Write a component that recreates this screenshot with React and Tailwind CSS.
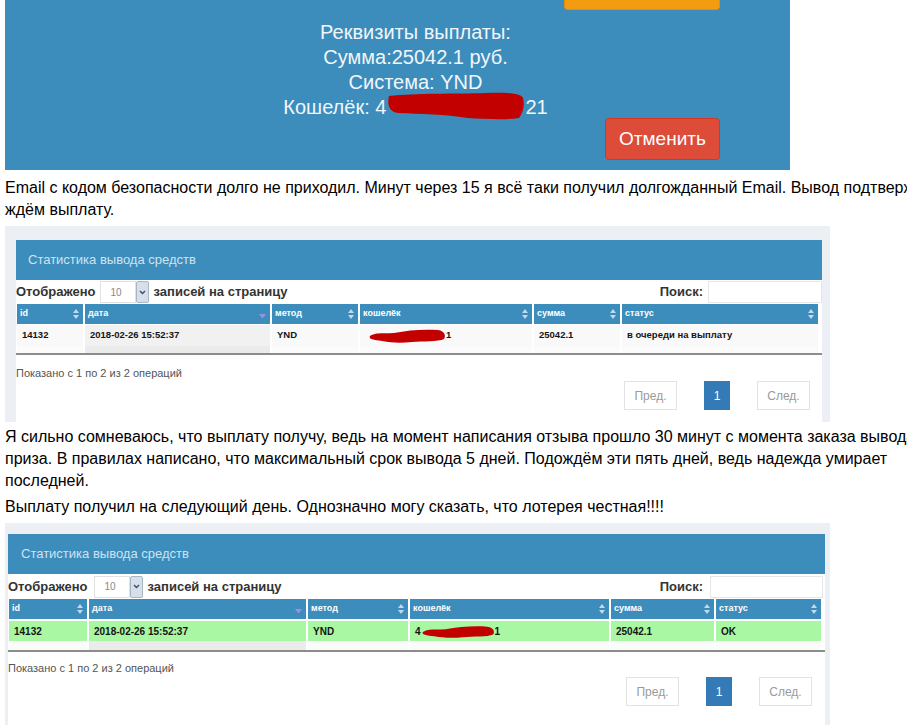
import React from "react";

const HEAD = ["id", "дата", "метод", "кошелёк", "сумма", "статус"];

function SortBoth() {
  return (
    <svg width="6" height="10" viewBox="0 0 6 10" className="shrink-0">
      <path d="M3 0 L6 4 H0 Z" fill="#c3d8ea" />
      <path d="M3 10 L6 6 H0 Z" fill="#c3d8ea" />
    </svg>
  );
}

function SortDesc() {
  return (
    <svg width="7" height="10" viewBox="0 0 7 10" className="shrink-0">
      <path d="M0 5 H7 L3.5 9.5 Z" fill="#9b90e4" />
    </svg>
  );
}

// red marker blot over the wallet number
function Blot({ w, h, big }) {
  const d = big
    ? "M3 4 C 30 1, 70 2, 100 1 C 120 0, 136 1, 138 6 C 140 13, 138 21, 134 26 C 122 28, 100 27, 82 26 C 60 22, 35 22, 12 21 C 3 20, 1 12, 3 4 Z"
    : "M2 9 C 8 5, 16 7, 26 6 C 40 3, 56 2, 70 3 C 77 4, 78 9, 76 12 C 70 15, 55 14, 44 15 C 34 16, 24 16, 14 14 C 6 13, 0 12, 2 9 Z";
  return (
    <svg width={w} height={h} viewBox={big ? "0 0 140 28" : "0 0 78 17"} preserveAspectRatio="none">
      <path d={d} fill="#c20000" />
    </svg>
  );
}

function PayoutCard() {
  return (
    <div className="w-[785px] h-[170px] bg-[#3c8dbc] flex flex-col">
      <div className="flex justify-end pr-[70px]">
        <div className="w-[156px] h-[10px] bg-[#f39c12] rounded-b-[4px] border-x border-b border-[#e08e0b]" />
      </div>
      <div className="mt-[10px] pl-[36px] text-center text-[#f2f6fa] text-[20px] leading-[25px]">
        <div>Реквизиты выплаты:</div>
        <div>Сумма:25042.1 руб.</div>
        <div>Система: YND</div>
        <div className="flex justify-center items-center">
          <span>Кошелёк: 4</span>
          <span className="inline-block relative w-[139px] h-[25px]">
            <span className="absolute left-0 top-[-3px]">
              <Blot w={139} h={28} big />
            </span>
          </span>
          <span>21</span>
        </div>
      </div>
      <div className="flex justify-end pr-[70px] -mt-[2px]">
        <button className="w-[115px] h-[42px] bg-[#dd4b39] border border-[#d33724] rounded-[4px] text-white text-[19px]">
          Отменить
        </button>
      </div>
    </div>
  );
}

function Pager({ gap }) {
  return (
    <div className={`flex justify-end ${gap}`}>
      <div className="w-[53px] h-[29px] border border-[#e3e3e3] bg-white flex items-center justify-center text-[12px] text-[#9a9a9a]">
        Пред.
      </div>
      <div className="w-[26px] h-[29px] bg-[#337ab7] flex items-center justify-center text-[12px] text-white">
        1
      </div>
      <div className="w-[53px] h-[29px] border border-[#e3e3e3] bg-white flex items-center justify-center text-[12px] text-[#9a9a9a]">
        След.
      </div>
    </div>
  );
}

function StatsPanel({ cfg }) {
  return (
    <div className={`bg-[#ecf0f5] ${cfg.outer}`}>
      <div className="h-[40px] bg-[#3c8dbc] flex items-center">
        <span className={`text-[13px] text-[#cfe2f0] ${cfg.titlePad}`}>Статистика вывода средств</span>
      </div>
      <div className={`bg-white ${cfg.body}`}>
        <div className={`flex items-center ${cfg.ctrlH}`}>
          <span className="text-[13px] font-bold text-[#333]">Отображено</span>
          <div className={`flex h-[22px] ${cfg.selMl}`}>
            <div className="w-[36px] h-full bg-white border border-[#e2e2e2] flex items-center pl-[10px] text-[10px] text-[#888]">
              10
            </div>
            <div className="w-[13px] h-full border border-[#a7b6c6] bg-[#d7e0ea] flex items-center justify-center rounded-[2px]">
              <svg width="7" height="5" viewBox="0 0 7 5">
                <path d="M1 1 L3.5 3.5 L6 1" stroke="#3d4f66" strokeWidth="1.4" fill="none" />
              </svg>
            </div>
          </div>
          <span className="ml-[5px] text-[13px] font-bold text-[#333]">записей на страницу</span>
          <span className="ml-auto text-[13px] font-bold text-[#333]">Поиск:</span>
          <div className={`h-[22px] bg-white border border-[#e6e6e6] ${cfg.search}`} />
        </div>

        <div className="pl-[1px]">
          <div className="flex gap-[2px] h-[20px]">
            {HEAD.map((h, i) => (
              <div
                key={h}
                style={{ width: cfg.cols[i] }}
                className="bg-[#3c8dbc] flex items-center justify-between pl-[3px] pr-[4px] text-[9px] font-bold text-white"
              >
                <span>{h}</span>
                {i === 1 ? <SortDesc /> : <SortBoth />}
              </div>
            ))}
          </div>
          <div className={`flex gap-[2px] mt-[1px] ${cfg.rowH} font-bold text-[#151515] ${cfg.rowText}`}>
            {cfg.cells.map((c, i) => (
              <div
                key={i}
                style={{ width: cfg.cols[i] }}
                className={`flex items-center pl-[5px] ${i === 1 ? cfg.sortedBg : cfg.rowBg}`}
              >
                {i === 3 ? (
                  <span className="flex items-center">
                    {cfg.walletHead}
                    <Blot w={cfg.blotW} h={cfg.blotH} />
                    <span>1</span>
                  </span>
                ) : (
                  c
                )}
              </div>
            ))}
          </div>
          <div className={`flex gap-[2px] ${cfg.sliverH}`}>
            {cfg.cols.map((w, i) => (
              <div key={i} style={{ width: w }} className={i === 1 ? "bg-[#ebebeb]" : "bg-[#fbfbfb]"} />
            ))}
          </div>
        </div>
        <div className="h-[2px] bg-[#8c8c8c]" />

        <div className={cfg.foot}>
          <div className="text-[11px] leading-[14px] text-[#555]">Показано с 1 по 2 из 2 операций</div>
          <div className={cfg.pagerWrap}>
            <Pager gap={cfg.pagerGap} />
          </div>
        </div>
      </div>
    </div>
  );
}

const first = {
  outer: "mt-[5px] w-[825px] pt-[14px] pl-[11px] pr-[8px]",
  body: "",
  titlePad: "pl-[12px]",
  ctrlH: "h-[24px] pr-0",
  selMl: "ml-[4px]",
  search: "ml-[5px] w-[114px]",
  cols: [66, 185, 86, 172, 86, 196],
  rowH: "h-[21px]",
  rowText: "text-[9.5px]",
  rowBg: "bg-[#f9f9f9]",
  sortedBg: "bg-[#f1f1f1]",
  sliverH: "h-[7px]",
  cells: ["14132", "2018-02-26 15:52:37", "YND", "", "25042.1", "в очереди на выплату"],
  walletHead: <span className="w-[3px]" />,
  blotW: 78,
  blotH: 17,
  foot: "pt-[11px] pb-[12px]",
  pagerWrap: "mt-[1px] pr-[12px]",
  pagerGap: "gap-[27px]",
};

const second = {
  outer: "mt-[5px] w-[825px] pt-[11px] pl-[3px] pr-[5px]",
  body: "h-[200px]",
  titlePad: "pl-[13px]",
  ctrlH: "h-[25px] pr-[2px]",
  selMl: "ml-[6px]",
  search: "ml-[7px] w-[113px]",
  cols: [78, 217, 100, 199, 103, 105],
  rowH: "h-[20px] mt-[2px]",
  rowText: "text-[10px]",
  rowBg: "bg-[#a9f6a3]",
  sortedBg: "bg-[#a9f6a3]",
  sliverH: "h-[9px]",
  cells: ["14132", "2018-02-26 15:52:37", "YND", "", "25042.1", "OK"],
  walletHead: <span>4</span>,
  blotW: 74,
  blotH: 15,
  foot: "pt-[9px] pl-0",
  pagerWrap: "mt-[2px] pr-[13px]",
  pagerGap: "gap-[27px]",
};

export default function App() {
  return (
    <div className="w-[907px] h-[725px] overflow-hidden bg-white font-['Liberation_Sans',Arial,sans-serif]">
      <div className="w-[1100px] pl-[5px]">
        <PayoutCard />

        <div className="mt-[7px] text-[16px] leading-[22px] text-black whitespace-nowrap">
          <div>
            Email с кодом безопасности долго не приходил. Минут через 15 я всё таки получил долгожданный Email. Вывод подтверждён,
          </div>
          <div>ждём выплату.</div>
        </div>

        <StatsPanel cfg={first} />

        <div className="mt-[4px] text-[16px] leading-[22px] text-black whitespace-nowrap">
          <div>
            Я сильно сомневаюсь, что выплату получу, ведь на момент написания отзыва прошло 30 минут с момента заказа вывода
          </div>
          <div>приза. В правилах написано, что максимальный срок вывода 5 дней. Подождём эти пять дней, ведь надежда умирает</div>
          <div>последней.</div>
        </div>
        <div className="mt-[4px] text-[16px] leading-[22px] text-black whitespace-nowrap">
          Выплату получил на следующий день. Однозначно могу сказать, что лотерея честная!!!!
        </div>

        <StatsPanel cfg={second} />
      </div>
    </div>
  );
}
